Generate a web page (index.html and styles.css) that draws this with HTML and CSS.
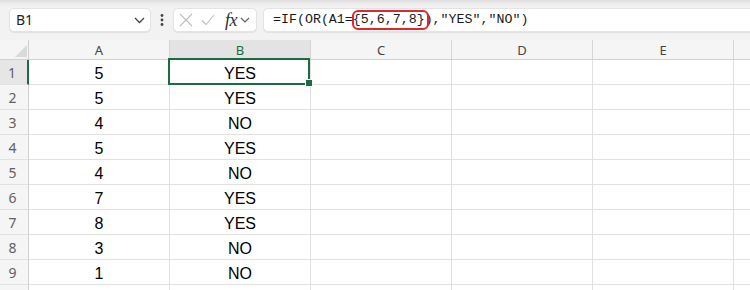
FILE: index.html
```html
<!DOCTYPE html>
<html>
<head>
<meta charset="utf-8">
<link rel="stylesheet" href="styles.css">
</head>
<body>
<div class="toolbar">
  <div class="namebox">
    <span class="nb-text">B1</span>
    <svg class="chev" width="11" height="7" viewBox="0 0 11 7"><polyline points="1,1 5.5,5.5 10,1" fill="none" stroke="#424242" stroke-width="1.3"/></svg>
  </div>
  <div class="dots">
    <svg width="4" height="12" viewBox="0 0 4 12"><circle cx="2" cy="1.5" r="1.4" fill="#424242"/><circle cx="2" cy="6" r="1.4" fill="#424242"/><circle cx="2" cy="10.5" r="1.4" fill="#424242"/></svg>
  </div>
  <div class="fxbox">
    <svg class="ico-x" width="14" height="14" viewBox="0 0 14 14"><path d="M1 1 L13 13 M13 1 L1 13" stroke="#bdbdbd" stroke-width="1.1" fill="none"/></svg>
    <svg class="ico-check" width="14" height="12" viewBox="0 0 14 12"><path d="M1 6.5 L5 10.5 L13 1" stroke="#bdbdbd" stroke-width="1.1" fill="none"/></svg>
    <span class="fx">fx</span>
    <svg class="chev-s" width="10" height="6" viewBox="0 0 10 6"><polyline points="1,1 5,5 9,1" fill="none" stroke="#616161" stroke-width="1.2"/></svg>
  </div>
  <div class="formula"><span>=IF(OR(A1=</span><span class="hl">{5,6,7,8}</span><span>),"YES","NO")</span></div>
</div>
<div class="sheet">
  <div class="corner"><span class="tri"></span></div>
  <div class="ch">A</div>
  <div class="ch sel">B</div>
  <div class="ch">C</div>
  <div class="ch">D</div>
  <div class="ch">E</div>
  <div class="ch last"></div>

  <div class="rh sel">1</div><div class="c">5</div><div class="c active">YES</div><div class="c"></div><div class="c"></div><div class="c"></div><div class="c last"></div>
  <div class="rh">2</div><div class="c">5</div><div class="c">YES</div><div class="c"></div><div class="c"></div><div class="c"></div><div class="c last"></div>
  <div class="rh">3</div><div class="c">4</div><div class="c">NO</div><div class="c"></div><div class="c"></div><div class="c"></div><div class="c last"></div>
  <div class="rh">4</div><div class="c">5</div><div class="c">YES</div><div class="c"></div><div class="c"></div><div class="c"></div><div class="c last"></div>
  <div class="rh">5</div><div class="c">4</div><div class="c">NO</div><div class="c"></div><div class="c"></div><div class="c"></div><div class="c last"></div>
  <div class="rh">6</div><div class="c">7</div><div class="c">YES</div><div class="c"></div><div class="c"></div><div class="c"></div><div class="c last"></div>
  <div class="rh">7</div><div class="c">8</div><div class="c">YES</div><div class="c"></div><div class="c"></div><div class="c"></div><div class="c last"></div>
  <div class="rh">8</div><div class="c">3</div><div class="c">NO</div><div class="c"></div><div class="c"></div><div class="c"></div><div class="c last"></div>
  <div class="rh">9</div><div class="c">1</div><div class="c">NO</div><div class="c"></div><div class="c"></div><div class="c"></div><div class="c last"></div>
  <div class="rh"></div><div class="c"></div><div class="c"></div><div class="c"></div><div class="c"></div><div class="c"></div><div class="c last"></div>
</div>
</body>
</html>
```

FILE: styles.css
```css
* { box-sizing: border-box; }
html, body {
  margin: 0;
  padding: 0;
  width: 750px;
  height: 290px;
  overflow: hidden;
  background: #ffffff;
}
body {
  font-family: "Liberation Sans", Arial, sans-serif;
}

.toolbar {
  height: 40px;
  display: flex;
  align-items: flex-start;
  padding: 8px 0 0 9px;
  background: linear-gradient(to bottom, #dcdada 0px, #ebeaea 3px, #f2f2f2 7px, #f2f2f2 100%);
  overflow: hidden;
}

.namebox {
  width: 142px;
  height: 24px;
  flex: none;
  background: #ffffff;
  border: 1px solid #e3e3e3;
  border-radius: 5px;
  box-shadow: 0 1px 1px rgba(0,0,0,0.07);
  display: flex;
  align-items: center;
  justify-content: space-between;
  padding: 0 5px 0 6px;
}
.nb-text {
  font-family: "Noto Sans", "Open Sans", sans-serif;
  font-size: 14px;
  color: #242424;
  line-height: 20px;
}
.chev { display: block; margin-top: 1px; }

.dots {
  width: 22px;
  height: 24px;
  flex: none;
  display: flex;
  align-items: center;
  justify-content: center;
}
.dots svg { display: block; }

.fxbox {
  width: 84px;
  height: 24px;
  flex: none;
  background: #ffffff;
  border: 1px solid #e3e3e3;
  border-radius: 5px;
  box-shadow: 0 1px 1px rgba(0,0,0,0.07);
  display: flex;
  align-items: center;
  padding-left: 4px;
}
.ico-x { display: block; margin-left: 1px; }
.ico-check { display: block; margin-left: 8px; }
.fx {
  font-family: "Liberation Serif", "Times New Roman", serif;
  font-style: italic;
  font-size: 18px;
  color: #303030;
  margin-left: 10px;
  line-height: 20px;
  letter-spacing: -0.5px;
}
.chev-s { display: block; margin-left: 3px; }

.formula {
  flex: 1;
  height: 24px;
  margin-left: 6px;
  margin-right: -10px;
  background: #ffffff;
  border: 1px solid #e3e3e3;
  border-radius: 5px;
  box-shadow: 0 1px 1px rgba(0,0,0,0.07);
  padding-left: 9px;
  font-family: "Liberation Mono", "Courier New", monospace;
  font-size: 13.3px;
  line-height: 22px;
  color: #1a1a1a;
  white-space: pre;
}
.hl {
  position: relative;
}
.hl::after {
  content: "";
  position: absolute;
  left: -1px;
  right: -4px;
  top: -2px;
  bottom: -3px;
  border: 2px solid #e3262c;
  border-radius: 6px;
}

.sheet {
  display: grid;
  grid-template-columns: 29px 141px 141px 141px 141px 141px 1fr;
  grid-template-rows: 20px repeat(10, 25px);
}

.corner {
  background: #f5f5f5;
  border-right: 1px solid #d0d0d0;
  border-bottom: 1px solid #d0d0d0;
  position: relative;
}
.tri {
  position: absolute;
  right: 1px;
  bottom: 2px;
  width: 0;
  height: 0;
  border-left: 12px solid transparent;
  border-bottom: 12px solid #dadada;
}

.ch {
  background: #f5f5f5;
  border-right: 1px solid #d6d6d6;
  border-bottom: 1px solid #d0d0d0;
  font-family: "Noto Sans", "Open Sans", sans-serif;
  font-size: 13px;
  color: #444444;
  text-align: center;
  line-height: 20px;
}
.ch.sel {
  background: #e3e3e3;
  color: #1d6b40;
}
.ch.last { border-right: none; }

.rh {
  background: #f5f5f5;
  border-right: 1px solid #d0d0d0;
  border-bottom: 1px solid #e1e1e1;
  font-family: "Noto Sans", "Open Sans", sans-serif;
  font-size: 14px;
  color: #616161;
  text-align: center;
  padding-right: 3px;
  padding-top: 2px;
  line-height: 22px;
}
.rh.sel {
  background: #e6e6e6;
  border-right: 2px solid #1d6b40;
}

.c {
  border-right: 1px solid #e1e1e1;
  border-bottom: 1px solid #e1e1e1;
  font-size: 16px;
  color: #000000;
  text-align: center;
  padding-top: 3px;
  line-height: 21px;
}
.c.last { border-right: none; }

.active { position: relative; }
.active::before {
  content: "";
  position: absolute;
  left: -2px;
  top: -2px;
  right: 0;
  bottom: -1px;
  border: 2px solid #1d6b40;
}
.active::after {
  content: "";
  position: absolute;
  right: -3px;
  bottom: -3px;
  width: 6px;
  height: 6px;
  background: #1d6b40;
  border: 1px solid #ffffff;
}
```
